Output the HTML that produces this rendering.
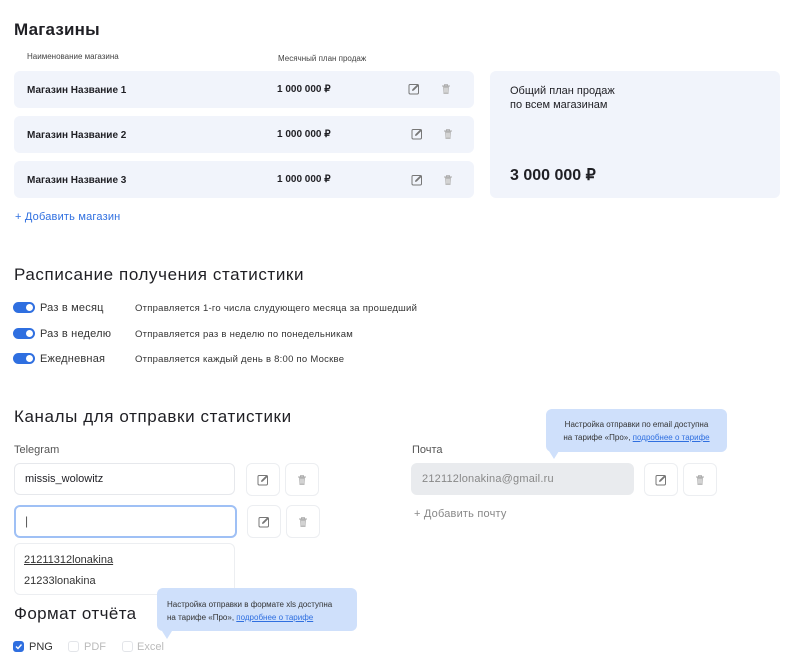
<!DOCTYPE html>
<html><head><meta charset="utf-8"><style>
*{margin:0;padding:0;box-sizing:border-box}
body{width:799px;height:670px;background:#fff;font-family:"Liberation Sans","Noto Sans CJK SC",sans-serif;color:#1f1f24;position:relative;overflow:hidden}
.a{position:absolute;white-space:nowrap}
.h{font-size:17px;font-weight:600;letter-spacing:0.2px}
.row{position:absolute;left:14px;width:460px;height:37px;background:#f1f4fb;border-radius:6px}
.row .n{position:absolute;left:13px;top:14px;font-size:10px;font-weight:600}
.row .p{position:absolute;left:263px;top:13px;font-size:10px;font-weight:600}
.ic{position:absolute}
.tg{position:absolute;left:13px;width:22px;height:11px;border-radius:6px;background:#2f6fe0}
.tg::after{content:"";position:absolute;right:2px;top:2px;width:7px;height:7px;border-radius:50%;background:#fff}
.lb{font-size:11px;color:#333;letter-spacing:0.2px}
.ds{font-size:9.5px;color:#333;letter-spacing:0.25px}
.inp{position:absolute;height:32px;border:1px solid #e6e8ec;border-radius:6px;background:#fff}
.btn{position:absolute;width:34px;height:33px;border:1px solid #eceef1;border-radius:6px;background:#fff}
.btn svg{position:absolute;left:10px;top:10px}
.tip{position:absolute;background:#cfe0fb;border-radius:6px;font-size:8px;color:#333;line-height:13px}
.tip a{color:#2f6fe0;text-decoration:underline}
.cb{position:absolute;top:641px;width:11px;height:11px;border-radius:3px;border:1px solid #e3e5e9}
</style></head><body>
<svg width="0" height="0" style="position:absolute"><defs>
<symbol id="ed" viewBox="0 0 12 12"><rect x="1" y="1.5" width="9.5" height="9.5" rx="1.2" fill="none" stroke="#777" stroke-width="1"/><path d="M4 8l.4-1.8L9.5 1.2l1.3 1.3-5 5z" fill="#777"/></symbol>
<symbol id="tr" viewBox="0 0 12 12"><path d="M2 3h8M4.5 3V1.8h3V3" fill="none" stroke="#aaa" stroke-width="1"/><path d="M3 3.5h6l-.5 7.5h-5z" fill="#bbb"/><path d="M5 5v4.5M7 5v4.5" stroke="#fff" stroke-width=".7"/></symbol>
</defs></svg>

<div class="a h" style="left:14px;top:20px">Магазины</div>
<div class="a" style="left:27px;top:52px;font-size:8px;color:#444">Наименование магазина</div>
<div class="a" style="left:278px;top:54px;font-size:8px;color:#444">Месячный план продаж</div>

<div class="row" style="top:71px"><div class="n">Магазин Название 1</div><div class="p">1 000 000 ₽</div>
<svg class="ic" style="left:394px;top:12px" width="12" height="12"><use href="#ed"/></svg><svg class="ic" style="left:426px;top:12px" width="12" height="12"><use href="#tr"/></svg></div>
<div class="row" style="top:116px"><div class="n">Магазин Название 2</div><div class="p">1 000 000 ₽</div>
<svg class="ic" style="left:397px;top:12px" width="12" height="12"><use href="#ed"/></svg><svg class="ic" style="left:428px;top:12px" width="12" height="12"><use href="#tr"/></svg></div>
<div class="row" style="top:161px"><div class="n">Магазин Название 3</div><div class="p">1 000 000 ₽</div>
<svg class="ic" style="left:397px;top:13px" width="12" height="12"><use href="#ed"/></svg><svg class="ic" style="left:428px;top:13px" width="12" height="12"><use href="#tr"/></svg></div>

<div style="position:absolute;left:490px;top:71px;width:290px;height:127px;background:#f1f4fb;border-radius:6px"></div>
<div class="a" style="left:510px;top:84px;font-size:11px;line-height:14px;font-weight:500">Общий план продаж<br>по всем магазинам</div>
<div class="a" style="left:510px;top:165px;font-size:16px;font-weight:600">3 000 000 ₽</div>

<div class="a" style="left:15px;top:211px;font-size:11px;color:#2f6fe0;letter-spacing:0.2px">+ Добавить магазин</div>

<div class="a h" style="left:14px;top:265px;font-weight:500;letter-spacing:0.6px">Расписание получения статистики</div>
<div class="tg" style="top:302px"></div><div class="a lb" style="left:40px;top:302px">Раз в месяц</div><div class="a ds" style="left:135px;top:303px">Отправляется 1-го числа слудующего месяца за прошедший</div>
<div class="tg" style="top:328px"></div><div class="a lb" style="left:40px;top:328px">Раз в неделю</div><div class="a ds" style="left:135px;top:329px">Отправляется раз в неделю по понедельникам</div>
<div class="tg" style="top:353px"></div><div class="a lb" style="left:40px;top:353px">Ежедневная</div><div class="a ds" style="left:135px;top:354px">Отправляется каждый день в 8:00 по Москве</div>

<div class="a h" style="left:14px;top:407px;font-weight:500;letter-spacing:0.6px">Каналы для отправки статистики</div>
<div class="a" style="left:14px;top:444px;font-size:11px;color:#555">Telegram</div>
<div class="inp" style="left:14px;top:463px;width:221px"><span class="a" style="left:10px;top:9px;font-size:11px">missis_wolowitz</span></div>
<div class="btn" style="left:246px;top:463px"><svg width="12" height="12"><use href="#ed"/></svg></div>
<div class="btn" style="left:285px;top:463px"><svg width="12" height="12"><use href="#tr"/></svg></div>
<div class="inp" style="left:14px;top:505px;width:223px;height:33px;border:2px solid #9fc0f5"><span class="a" style="left:9px;top:7px;font-size:12px;color:#555">|</span></div>
<div class="btn" style="left:247px;top:505px"><svg width="12" height="12"><use href="#ed"/></svg></div>
<div class="btn" style="left:286px;top:505px"><svg width="12" height="12"><use href="#tr"/></svg></div>
<div style="position:absolute;left:14px;top:543px;width:221px;height:52px;border:1px solid #eceef1;border-radius:6px;background:#fff"></div>
<div class="a" style="left:24px;top:554px;font-size:11px;text-decoration:underline;color:#333">21211312lonakina</div>
<div class="a" style="left:24px;top:575px;font-size:11px;color:#333">21233lonakina</div>

<div class="a h" style="left:14px;top:604px;font-weight:500;letter-spacing:0.4px">Формат отчёта</div>
<div class="tip" style="left:157px;top:588px;width:200px;height:43px;padding:10px 0 0 10px">Настройка отправки в формате xls доступна<br>на тарифе «Про», <a>подробнее о тарифе</a></div>
<div style="position:absolute;left:162px;top:631px;width:0;height:0;border-left:5px solid transparent;border-right:5px solid transparent;border-top:8px solid #cfe0fb"></div>
<div class="cb" style="left:13px;background:#2f6fe0;border-color:#2f6fe0"><svg width="9" height="9" style="position:absolute;left:0;top:0"><path d="M2 4.5l2 2 3.5-4" stroke="#fff" stroke-width="1.4" fill="none"/></svg></div>
<div class="a" style="left:29px;top:641px;font-size:11px;color:#333">PNG</div>
<div class="cb" style="left:68px"></div><div class="a" style="left:84px;top:641px;font-size:11px;color:#bbb">PDF</div>
<div class="cb" style="left:122px"></div><div class="a" style="left:137px;top:641px;font-size:11px;color:#bbb">Excel</div>

<div class="a" style="left:412px;top:444px;font-size:11px;color:#555">Почта</div>
<div class="inp" style="left:411px;top:463px;width:223px;background:#e9ebee;border-color:#e9ebee"><span class="a" style="left:10px;top:9px;font-size:11px;color:#888;letter-spacing:0.2px">212112lonakina@gmail.ru</span></div>
<div class="btn" style="left:644px;top:463px"><svg width="12" height="12"><use href="#ed"/></svg></div>
<div class="btn" style="left:683px;top:463px"><svg width="12" height="12"><use href="#tr"/></svg></div>
<div class="a" style="left:414px;top:508px;font-size:11px;color:#888;letter-spacing:0.2px">+ Добавить почту</div>
<div class="tip" style="left:546px;top:409px;width:181px;height:43px;padding-top:9px;text-align:center">Настройка отправки по email доступна<br>на тарифе «Про», <a>подробнее о тарифе</a></div>
<div style="position:absolute;left:549px;top:451px;width:0;height:0;border-left:5px solid transparent;border-right:5px solid transparent;border-top:8px solid #cfe0fb"></div>
</body></html>
